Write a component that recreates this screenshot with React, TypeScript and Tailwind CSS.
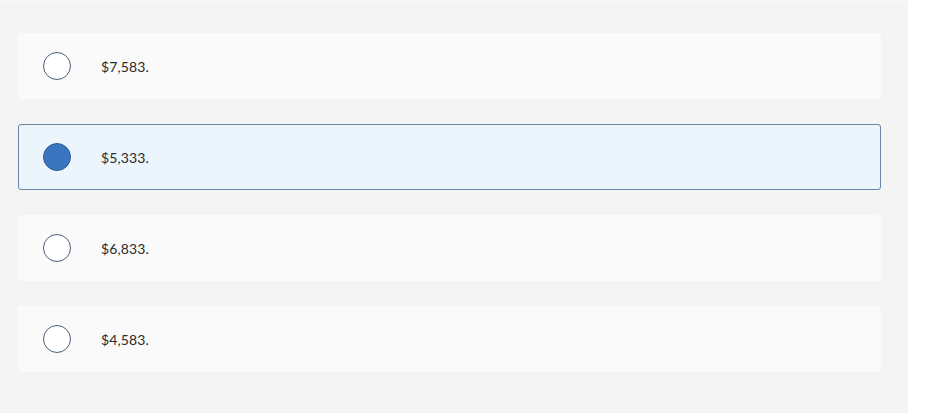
import { useState } from 'react'

const options = ['$7,583.', '$5,333.', '$6,833.', '$4,583.']

export default function App() {
  const [selected, setSelected] = useState(1)

  return (
    <div className="w-[940px] h-[413px] bg-white flex" style={{ fontFamily: 'Lato, "Noto Sans", sans-serif' }}>
      <div className="w-[908px] h-full bg-[#f4f4f4] border-t-[3px] border-[#f7f7f7] pt-[30px] pl-[18px]">
        <div className="flex flex-col gap-[25px] w-[863px]">
          {options.map((label, i) => {
            const active = i === selected
            return (
              <button
                key={label}
                onClick={() => setSelected(i)}
                className={`h-[66px] flex items-center text-left rounded-[3px] border ${
                  active ? 'bg-[#ecf4fc] border-[#6a86a6]' : 'bg-[#fafafa] border-[#fafafa]'
                }`}
              >
                <span
                  className={`ml-[24px] w-[28px] h-[28px] rounded-full border-[1.5px] ${
                    active ? 'bg-[#3a76c0] border-[#2c5d95]' : 'bg-white border-[#4a5f78]'
                  }`}
                />
                <span className="ml-[30px] text-[14px] text-[#2b2b2b] tracking-[0.1px]">{label}</span>
              </button>
            )
          })}
        </div>
      </div>
    </div>
  )
}
